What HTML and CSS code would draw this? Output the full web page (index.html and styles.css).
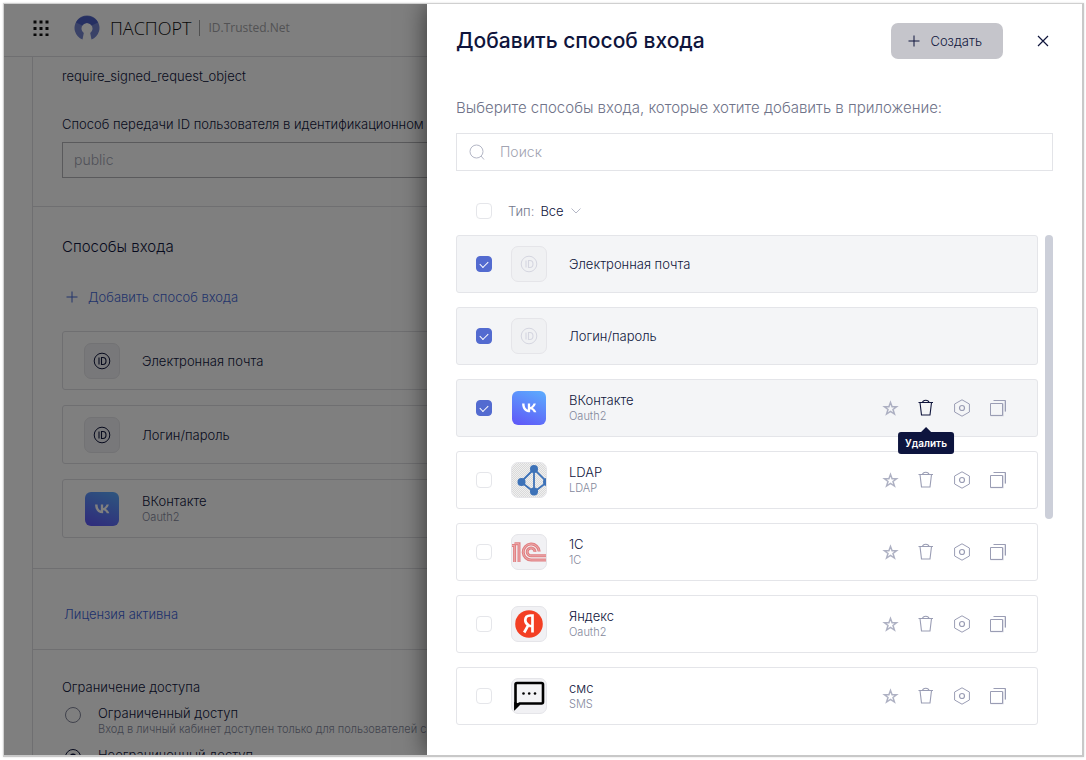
FILE: index.html
```html
<!DOCTYPE html>
<html lang="ru">
<head>
<meta charset="utf-8">
<title>Добавить способ входа</title>
<link rel="stylesheet" href="styles.css">
</head>
<body>
<svg class="defs" aria-hidden="true">
  <defs>
    <linearGradient id="vk-fill" x1="0.7" y1="0" x2="0.3" y2="1"><stop offset="0" stop-color="#5ca6fd"/><stop offset="1" stop-color="#5f5cf8"/></linearGradient>
    <pattern id="checker" width="2" height="2" patternUnits="userSpaceOnUse"><rect width="2" height="2" fill="#efefef"/><rect width="1" height="1" fill="#dadada"/><rect x="1" y="1" width="1" height="1" fill="#dadada"/></pattern>
    <clipPath id="tile-clip"><rect x="1" y="1" width="34" height="34" rx="6"/></clipPath>
  </defs>
  <symbol id="i-id" viewBox="0 0 18 18"><g fill="none" stroke="currentColor"><circle cx="9" cy="9" r="7.8"/><path d="M6 5.5v7M8.5 5.5v7h1.4c2 0 3.1-1.4 3.1-3.5s-1.1-3.5-3.1-3.5z" stroke-width="1.1"/></g></symbol>
  <symbol id="i-plus" viewBox="0 0 12 12"><path d="M6 .5v11M.5 6h11" fill="none" stroke="currentColor"/></symbol>
  <symbol id="i-vk" viewBox="0 0 36 36"><rect x="1" y="1" width="34" height="34" rx="6" fill="url(#vk-fill)"/><path transform="translate(10.2 9.2) scale(.68)" fill="#fff" d="M12.77 19.29C5.57 19.29 1.47 14.4 1.3 6.25H4.9C5.02 12.23 7.66 14.76 9.75 15.28V6.25H13.14V11.41C15.21 11.19 17.39 8.83 18.12 6.25H21.51C20.95 9.46 18.58 11.81 16.9 12.79C18.58 13.57 21.27 15.62 22.3 19.29H18.57C17.77 16.79 15.77 14.86 13.14 14.6V19.29Z"/></symbol>
  <symbol id="i-star" viewBox="0 0 18 18"><path d="M9.500 3.500l1.600 4.300h4.400l-3.500 2.700 1.400 4.500-3.900-2.700-3.900 2.700L7 10.500 3.500 7.800h4.400z" fill="none" stroke="currentColor" stroke-width="1.500" stroke-opacity=".8"/></symbol>
  <symbol id="i-trash" viewBox="0 0 18 18"><path d="M1.500 3.500h14.500M3 3.500l1.500 12.500h8.500L14.500 3.500M5.500 3.500c.5-3 6-3 6.500 0" fill="none" stroke="currentColor" stroke-width="1.100"/></symbol>
  <symbol id="i-hex" viewBox="0 0 18 18"><g fill="none" stroke="currentColor"><path d="M9 .8l7.400 4.200v8L9 17.200 1.600 13V5z"/><circle cx="9" cy="9" r="2.500" stroke-width="1.200"/></g></symbol>
  <symbol id="i-copy" viewBox="0 0 18 18"><g fill="none" stroke="currentColor"><path d="M1.500 4.500h12v12h-12zM4.500 1.500h12v11"/><path d="M14 4.500v12h-12.500M16 1.500v11" stroke-opacity=".4" stroke-width="1.500"/></g></symbol>
</svg>

<div class="frame">
  <div class="page">
    <header class="topbar">
      <button class="apps" aria-label="Приложения"><svg width="16" height="16" viewBox="0 0 16 16"><path d="M.5 2h15M.5 8.500h15M.5 15h15" fill="none" stroke="#111" stroke-width="3" stroke-dasharray="3 3"/></svg></button>
      <svg class="logo" width="26" height="26" viewBox="0 0 26 26"><path d="M8.500 24.600A12.500 12.500 0 1 1 17.500 24.600L16.200 18A5.500 5.500 0 1 0 9.800 18z" fill="#7484cf"/><path d="M2 7.500A12.500 12.500 0 0 1 24 7.500L17.600 10.500A5.500 5.500 0 0 0 8.400 10.500z" fill="#4b5fc4"/></svg>
      <span class="brand">ПАСПОРТ</span>
      <span class="domain">ID.Trusted.Net</span>
    </header>
    <div class="body">
      <main class="content">
        <section class="block block-first">
          <p class="line">require_signed_request_object</p>
          <label class="line field-label" for="auth">Способ передачи ID пользователя в идентификационном токене</label>
          <input class="field" id="auth" type="text" placeholder="public">
        </section>
        <section class="block block-methods">
          <h2 class="subhead">Способы входа</h2>
          <button class="add"><svg width="12" height="12"><use href="#i-plus"/></svg>Добавить способ входа</button>
          <ul class="methods">
            <li class="method"><span class="tile"><svg width="18" height="18"><use href="#i-id"/></svg></span><span class="name">Электронная почта</span></li>
            <li class="method"><span class="tile"><svg width="18" height="18"><use href="#i-id"/></svg></span><span class="name">Логин/пароль</span></li>
            <li class="method"><svg class="pic" width="36" height="36"><use href="#i-vk"/></svg><span class="name">ВКонтакте<small>Oauth2</small></span></li>
          </ul>
        </section>
        <section class="block block-license"><a class="license" href="#">Лицензия активна</a></section>
        <fieldset class="block block-access">
          <legend class="line">Ограничение доступа</legend>
          <label class="choice"><input type="radio" name="access"><span>Ограниченный доступ<small>Вход в личный кабинет доступен только для пользователей с правами</small></span></label>
          <label class="choice"><input type="radio" name="access" checked><span>Неограниченный доступ</span></label>
        </fieldset>
      </main>
    </div>
  </div>

  <div class="overlay">
    <section class="drawer" role="dialog" aria-labelledby="title">
      <header class="drawer-head">
        <h1 id="title">Добавить способ входа</h1>
        <button class="create"><svg width="12" height="12"><use href="#i-plus"/></svg>Создать</button>
        <button class="close" aria-label="Закрыть"><svg width="12" height="12" viewBox="0 0 12 12"><path d="M1 1l10 10M11 1L1 11" fill="none" stroke="currentColor" stroke-width="1.200"/></svg></button>
      </header>
      <p class="hint">Выберите способы входа, которые хотите добавить в приложение:</p>
      <label class="search"><svg width="16" height="16" viewBox="0 0 16 16"><g fill="none" stroke="#b4b7c6"><circle cx="7.500" cy="7.500" r="6.500"/><path d="M12 12l3 3.500"/></g></svg><input type="search" placeholder="Поиск" aria-label="Поиск"></label>
      <div class="filter">
        <input class="check" type="checkbox" aria-label="Выбрать все">
        <label for="kind">Тип:</label>
        <select id="kind"><option>Все</option></select>
        <svg width="10" height="6" viewBox="0 0 10 6"><path d="M.5.500L5 5 9.500.500" fill="none" stroke="#b4b7c6"/></svg>
      </div>
      <div class="scroller">
        <ul class="list">
          <li class="row picked"><input class="check" type="checkbox" checked aria-label="Электронная почта"><span class="tile faded"><svg width="18" height="18"><use href="#i-id"/></svg></span><span class="name">Электронная почта</span></li>
          <li class="row picked"><input class="check" type="checkbox" checked aria-label="Логин/пароль"><span class="tile faded"><svg width="18" height="18"><use href="#i-id"/></svg></span><span class="name">Логин/пароль</span></li>
          <li class="row picked"><input class="check" type="checkbox" checked aria-label="ВКонтакте"><svg class="pic" width="36" height="36"><use href="#i-vk"/></svg><span class="name">ВКонтакте<small>Oauth2</small></span>
            <span class="actions"><button aria-label="В избранное"><svg width="18" height="18"><use href="#i-star"/></svg></button><button class="active" aria-describedby="tip"><svg width="18" height="18"><use href="#i-trash"/></svg><span class="tooltip" id="tip" role="tooltip">Удалить</span></button><button aria-label="Настройки"><svg width="18" height="18"><use href="#i-hex"/></svg></button><button aria-label="Копировать"><svg width="18" height="18"><use href="#i-copy"/></svg></button></span></li>
          <li class="row"><input class="check" type="checkbox" aria-label="LDAP"><span class="tile"><svg width="36" height="36" viewBox="0 0 36 36"><g clip-path="url(#tile-clip)"><rect width="36" height="36" fill="url(#checker)"/><g stroke="#3d72b8" stroke-width="1.800" fill="none"><path d="M23 7L10 20l13 10 13-10zM23 7v23"/></g><g fill="#3d72b8"><circle cx="23" cy="7" r="4"/><circle cx="10.500" cy="20" r="4"/><circle cx="23" cy="29.500" r="4"/><circle cx="36" cy="20" r="4"/></g></g></svg></span><span class="name">LDAP<small>LDAP</small></span>
            <span class="actions"><button aria-label="В избранное"><svg width="18" height="18"><use href="#i-star"/></svg></button><button aria-label="Удалить"><svg width="18" height="18"><use href="#i-trash"/></svg></button><button aria-label="Настройки"><svg width="18" height="18"><use href="#i-hex"/></svg></button><button aria-label="Копировать"><svg width="18" height="18"><use href="#i-copy"/></svg></button></span></li>
          <li class="row"><input class="check" type="checkbox" aria-label="1С"><span class="tile"><svg width="36" height="36" viewBox="0 0 36 36"><g fill="none" stroke="#e07f81" stroke-width="3"><path d="M1 11.500h2.600V28M3.500 9.700h4.500V28M28.200 17.500A8 8 0 1 0 20.500 26H35M24 18A3.900 3.900 0 1 0 20.500 21.800H35"/></g><g fill="none" stroke="#f0b9bb" stroke-width=".7"><path d="M1 11.500h2.600V28M3.500 9.700h4.500V28M28.200 17.500A8 8 0 1 0 20.500 26H35M24 18A3.900 3.900 0 1 0 20.500 21.800H35"/></g></svg></span><span class="name">1C<small>1C</small></span>
            <span class="actions"><button aria-label="В избранное"><svg width="18" height="18"><use href="#i-star"/></svg></button><button aria-label="Удалить"><svg width="18" height="18"><use href="#i-trash"/></svg></button><button aria-label="Настройки"><svg width="18" height="18"><use href="#i-hex"/></svg></button><button aria-label="Копировать"><svg width="18" height="18"><use href="#i-copy"/></svg></button></span></li>
          <li class="row"><input class="check" type="checkbox" aria-label="Яндекс"><span class="tile"><svg width="36" height="36" viewBox="0 0 36 36"><circle cx="18" cy="18" r="13.800" fill="#f33f24"/><path d="M21.500 26.500v-17h-2.200c-3.200 0-5 1.900-5 4.700 0 2.300 1.100 3.600 3 5L13.200 26.500M21.500 20h-3.300" fill="none" stroke="#fff" stroke-width="2.700"/></svg></span><span class="name">Яндекс<small>Oauth2</small></span>
            <span class="actions"><button aria-label="В избранное"><svg width="18" height="18"><use href="#i-star"/></svg></button><button aria-label="Удалить"><svg width="18" height="18"><use href="#i-trash"/></svg></button><button aria-label="Настройки"><svg width="18" height="18"><use href="#i-hex"/></svg></button><button aria-label="Копировать"><svg width="18" height="18"><use href="#i-copy"/></svg></button></span></li>
          <li class="row"><input class="check" type="checkbox" aria-label="смс"><span class="tile"><svg width="36" height="36" viewBox="0 0 36 36"><path d="M4.500 29.500V6.500Q4.500 5 6 5h24.500q1.500 0 1.500 1.500v17.500q0 1.500-1.500 1.500h-22z" fill="#f3f3f5" stroke="#000" stroke-width="2.600"/><path d="M3.200 24v8.500L9.500 26z"/><g><circle cx="12.500" cy="15.500" r="1.300"/><circle cx="18.200" cy="15.500" r="1.300"/><circle cx="24" cy="15.500" r="1.300"/></g></svg></span><span class="name">смс<small>SMS</small></span>
            <span class="actions"><button aria-label="В избранное"><svg width="18" height="18"><use href="#i-star"/></svg></button><button aria-label="Удалить"><svg width="18" height="18"><use href="#i-trash"/></svg></button><button aria-label="Настройки"><svg width="18" height="18"><use href="#i-hex"/></svg></button><button aria-label="Копировать"><svg width="18" height="18"><use href="#i-copy"/></svg></button></span></li>
        </ul>
        <div class="track"><div class="thumb"></div></div>
      </div>
    </section>
  </div>
</div>
</body>
</html>
```
FILE: styles.css
```css
* { box-sizing: border-box; }
body { margin: 0; padding: 3px 2px 3px 3px; height: 100vh; background: #fff; color: #0f153c; font: 300 13px/16px Inter, "Liberation Sans", sans-serif; }
h1, h2, p, ul, fieldset { margin: 0; padding: 0; border: 0; }
ul { list-style: none; }
button { margin: 0; padding: 0; border: 0; background: none; color: inherit; font: inherit; cursor: pointer; }
svg { display: block; flex: none; }
.defs { position: absolute; width: 0; height: 0; }

.frame { position: relative; height: 100%; border: 1px solid #d0d0d0; border-right: 2px solid #c8c8c8; border-bottom: 2px solid #c8c8c8; box-shadow: 0 0 2px #ddd; overflow: hidden; }
.page { height: 100%; overflow: hidden; }

.topbar { display: flex; align-items: center; height: 53px; padding: 0 29px 4px; border-bottom: 1px solid #dedee2; }
.apps { width: 16px; margin-right: 25px; }
.logo { margin-right: 10px; }
.brand { padding-right: 8px; border-right: 1px solid #a0a0a0; color: #101010; font: 300 18px/16px "Open Sans", sans-serif; }
.domain { padding-left: 8px; color: #a5a5a8; font: 400 12px/16px "Open Sans", sans-serif; }

.body { padding-left: 28px; }
.content { border-left: 1px solid #dedee2; }
.block { padding: 0 29px; border-bottom: 1px solid #dedee2; }
.block-first { padding-top: 11px; padding-bottom: 28px; }
.line { display: block; white-space: nowrap; padding: 0; }
.field-label { margin-top: 32px; margin-bottom: 10px; }
.field { display: block; width: 100%; height: 36px; padding: 0 11px 2px; border: 1px solid #b4b4b8; background: transparent; font: 300 14px/20px Inter, sans-serif; }
.field::placeholder, .search input::placeholder { color: #a2a4b2; opacity: 1; }
.block-methods { padding-top: 30px; padding-bottom: 30px; }
.subhead { font: 300 15px/20px Inter, sans-serif; }
.add { display: flex; align-items: center; gap: 10px; margin: 32px 0 26px 4px; color: #4568d6; }
.methods { display: grid; gap: 15px; }
.method { display: flex; align-items: center; height: 59px; padding: 0 21px; border: 1px solid #dedee2; border-radius: 3px; }
.tile { display: flex; flex: none; align-items: center; justify-content: center; width: 36px; height: 36px; border: 1px solid #e5e5e9; border-radius: 7px; background: #f1f1f4; }
.faded { background: #f0f1f3; color: #d5d6e0; }
.name { flex: 1; margin-left: 22px; }
.name small, .choice small { display: block; color: #83879b; font-size: 11px; line-height: 16px; white-space: nowrap; }
.block-license { padding-top: 37px; padding-bottom: 27px; }
.license { display: block; margin-left: 2px; color: #3d62d8; text-decoration: none; }
.block-access { padding-top: 29px; border-bottom: 0; }
.block-access legend { float: left; width: 100%; margin-bottom: 10px; }
.choice { display: flex; clear: both; gap: 17px; margin-left: 3px; margin-bottom: 10px; }
.choice input { appearance: none; flex: none; width: 16px; height: 16px; margin: 2px 0; border: 1px solid #82859a; border-radius: 50%; }
.choice input:checked { border-color: #0f153c; background: radial-gradient(#0f153c 3px, transparent 4px); }

.overlay { position: absolute; inset: 0; display: flex; justify-content: flex-end; background: rgba(0, 0, 0, .5); }
.drawer { flex: 0 1 655px; padding: 19px 29px 0; background: #fff; box-shadow: 0 0 24px rgba(0, 0, 0, .6); }
.drawer-head { display: flex; align-items: center; margin-bottom: 40px; }
h1 { flex: 1; font: 500 21px/28px Inter, sans-serif; }
.create { display: flex; align-items: center; gap: 10px; height: 36px; padding: 0 21px 0 17px; border-radius: 7px; background: #c5c5cb; }
.close { margin: 0 4px 0 34px; }
.hint { margin-bottom: 16px; color: #6f7389; font-size: 15px; line-height: 18px; }
.search { display: flex; align-items: center; gap: 15px; height: 38px; padding: 0 12px; border: 1px solid #e3e4e8; }
.search input { flex: 1; min-width: 0; padding: 0; border: 0; outline: 0; background: none; font: 300 14px/20px Inter, sans-serif; }
.filter { display: flex; align-items: center; height: 16px; margin: 32px 0 16px 20px; }
.filter label { margin: 0 6px 0 16px; color: #73778c; }
.filter select { appearance: none; padding: 0; border: 0; background: none; color: #0f153c; font: inherit; margin-right: 7px; }
.check { appearance: none; flex: none; display: block; width: 16px; height: 16px; margin: 0; border: 1px solid #e5e6ea; border-radius: 4px; background: #fff; }
.check:checked { display: flex; align-items: center; justify-content: center; border-color: #536bd0; background: #536bd0; }
.check:checked::before { content: ""; width: 7px; height: 4px; margin-bottom: 2px; border: solid #fff; border-width: 0 0 1px 1px; transform: rotate(-45deg); }
.scroller { display: flex; gap: 7px; }
.list { flex: 1; display: grid; gap: 14px; }
.row { display: flex; align-items: center; height: 58px; padding: 0 21px 0 19px; border: 1px solid #e4e5e9; border-radius: 3px; }
.picked { background: #f4f5f7; }
.row .check { margin-right: 19px; }
.actions { display: flex; color: #9a9db4; }
.actions button { position: relative; display: flex; justify-content: center; width: 36px; }
.actions .active { z-index: 1; color: #0f153c; }
.tooltip { position: absolute; top: 33px; left: 50%; transform: translateX(-50%); padding: 3px 7px; border-radius: 3px; background: #0d143e; color: #fff; font-size: 10px; line-height: 16px; font-weight: 600; }
.tooltip::before { content: ""; position: absolute; left: 50%; bottom: 100%; margin-left: -5px; border: 5px solid transparent; border-top: 0; border-bottom-color: #0d143e; }
.track { width: 8px; }
.thumb { height: 58%; border-radius: 4px; background: #cccfd9; }
```
